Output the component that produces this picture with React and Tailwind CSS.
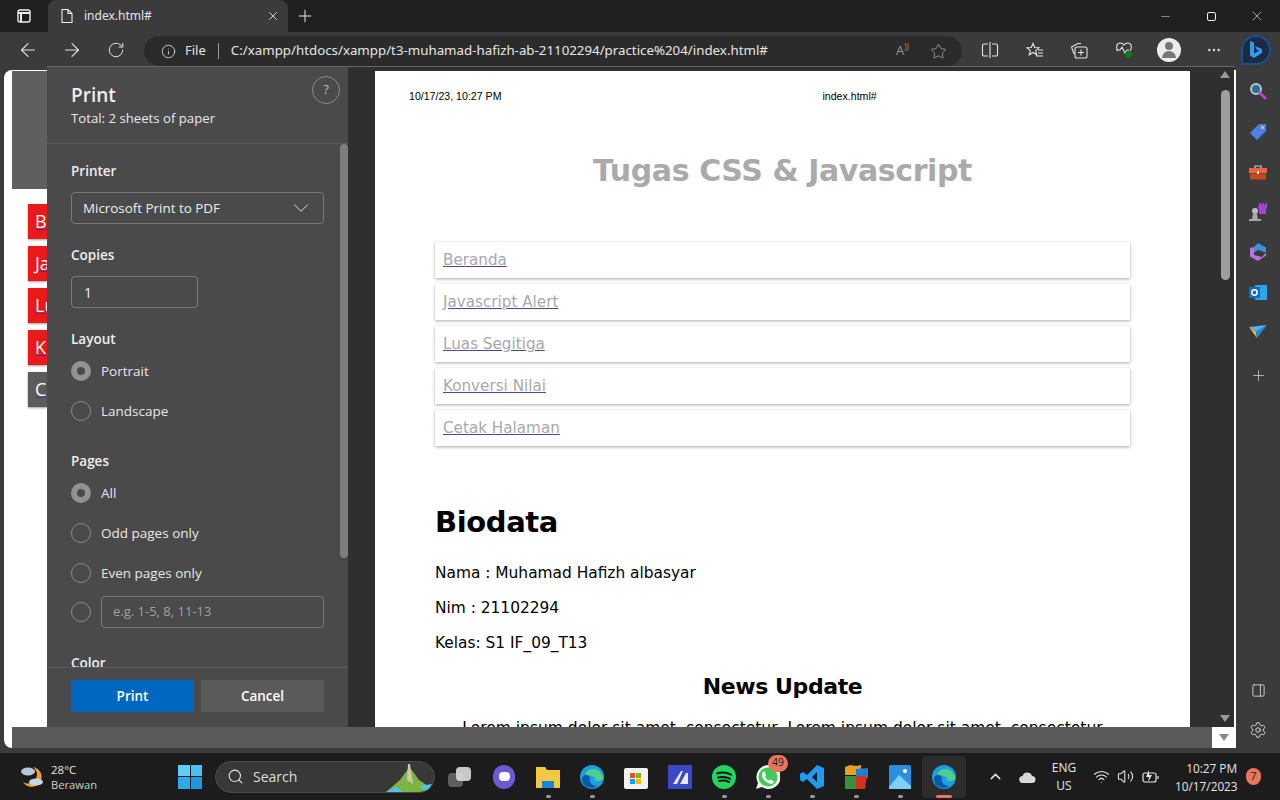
import { ArrowLeft, ArrowRight, RotateCw, Info, Star, X, Plus, Minus, Search, ChevronDown, ChevronUp, MoreHorizontal, Settings, PanelRight, Wifi, Volume2 } from 'lucide-react'

const uiFont = { fontFamily: '"Open Sans", "Noto Sans", sans-serif' }

const links = ['Beranda', 'Javascript Alert', 'Luas Segitiga', 'Konversi Nilai', 'Cetak Halaman']

function TabBar() {
  return (
    <div className="flex h-8 items-end bg-[#202020] text-[#e6e6e6]">
      <div className="flex h-8 w-12 items-center justify-center">
        <svg width="16" height="16" viewBox="0 0 16 16" fill="none" stroke="#eee" strokeWidth="1.4">
          <rect x="2" y="2" width="12" height="12" rx="2" />
          <path d="M2 5h12M5 5v9" strokeWidth="2" />
        </svg>
      </div>
      <div className="flex h-8 w-[240px] items-center rounded-t-lg bg-[#3b3b3b] pl-3 pr-2">
        <svg width="14" height="16" viewBox="0 0 14 16" fill="none" stroke="#eee" strokeWidth="1.1">
          <path d="M2 1.5h6l4 4v9H2zM8 1.5v4h4" />
        </svg>
        <span className="ml-[10px] flex-1 text-[12px]">index.html#</span>
        <X size={14} strokeWidth={1.5} />
      </div>
      <div className="flex h-8 w-[34px] items-center justify-center">
        <Plus size={20} strokeWidth={1.2} />
      </div>
      <div className="ml-auto flex h-8 items-center">
        <div className="flex w-[46px] justify-center"><Minus size={13} strokeWidth={1} /></div>
        <div className="flex w-[46px] justify-center">
          <div className="h-[9px] w-[9px] rounded-[2px] border border-[#eee]" />
        </div>
        <div className="flex w-[46px] justify-center"><X size={16} strokeWidth={1} /></div>
      </div>
    </div>
  )
}

function Toolbar() {
  return (
    <div className="flex h-[38px] items-start bg-[#3b3b3b] text-[#e4e4e4]">
      <div className="flex h-[36px] w-[56px] items-center justify-center"><ArrowLeft size={22} strokeWidth={1.2} /></div>
      <div className="flex h-[36px] w-[32px] items-center justify-center"><ArrowRight size={22} strokeWidth={1.2} /></div>
      <div className="flex h-[36px] w-[56px] items-center justify-center"><RotateCw size={18} strokeWidth={1.3} /></div>
      <div className="mt-[4px] flex h-[30px] w-[818px] items-center rounded-full bg-[#2b2b2b] pl-[17px] pr-[15px] text-[14px]">
        <Info size={15} strokeWidth={1.3} />
        <span className="ml-[9px] text-[13px]">File</span>
        <div className="mx-[12px] h-4 w-px bg-[#999]" />
        <span className="text-[13.300px] text-[#e6e6e6]">C:/xampp/htdocs/xampp/t3-muhamad-hafizh-ab-21102294/practice%204/index.html#</span>
        <span className="ml-auto text-[13px] text-[#8f8f8f]">A<span className="text-[8px] align-top">))</span></span>
        <Star size={17} strokeWidth={1.1} className="ml-[21px] text-[#aaa]" />
      </div>
      <div className="flex h-[36px] flex-1 items-center">
        <div className="ml-[19px] flex w-[18px] justify-center">
          <svg width="18" height="16" viewBox="0 0 18 16" fill="none" stroke="#e4e4e4" strokeWidth="1.1">
            <path d="M7 2H3a1.5 1.5 0 0 0-1.500 1.500v9A1.500 1.500 0 0 0 3 14h4M11 2h4a1.500 1.500 0 0 1 1.500 1.500v9A1.500 1.500 0 0 1 15 14h-4M9 0v16" />
          </svg>
        </div>
        <div className="ml-[27px] flex w-[18px] justify-center">
          <svg width="18" height="17" viewBox="0 0 18 17" fill="none" stroke="#e4e4e4" strokeWidth="1.1">
            <path d="M7 1.500l1.700 4 4.300.300-3.300 2.800 1 4.200L7 10.500l-3.700 2.300 1-4.200L1 5.800l4.300-.3zM12 8h5M12 11h5M10 14h7" />
          </svg>
        </div>
        <div className="ml-[26px] flex w-[18px] justify-center">
          <svg width="18" height="17" viewBox="0 0 18 17" fill="none" stroke="#e4e4e4" strokeWidth="1.1">
            <path d="M4 12L1.500 5 8 1.500h3" />
            <rect x="5" y="5" width="12" height="11" rx="2" />
            <path d="M11 7.500v6M8 10.500h6" />
          </svg>
        </div>
        <div className="relative ml-[27px] flex w-[18px] justify-center">
          <svg width="18" height="16" viewBox="0 0 18 16" fill="none" stroke="#e4e4e4" strokeWidth="1.1">
            <path d="M3 9C0 5 2 1 5.500 1 7 1 8.300 2 9 3c.7-1 2-2 3.500-2C16 1 18 5 15 9M1 8h4l2-3 3 6 2-3h2" />
          </svg>
          <div className="absolute left-[10px] top-[9px] h-[7px] w-[7px] rounded-full bg-[#0f7b0f]" />
        </div>
        <div className="ml-[24px] flex h-6 w-6 flex-col items-center justify-center overflow-hidden rounded-full bg-[#ececec]">
          <div className="h-2 w-2 rounded-full bg-[#777]" />
          <div className="mt-[1px] h-[7px] w-[14px] rounded-t-full rounded-b-md bg-[#777]" />
        </div>
        <MoreHorizontal size={16} strokeWidth={1.6} className="ml-[25px]" />
        <div className="ml-[19px] flex h-[30px] w-[30px] items-center justify-center rounded-full rounded-bl-none border-2 border-[#1c4f8f] bg-[#1b2b44]">
          <svg width="16" height="20" viewBox="0 0 16 20">
            <path d="M2 1l4 1.500v11l5-2.800-2.500-1.200L7 6l7 3v4l-8 5-4-2.500z" fill="#2f9cf2" />
          </svg>
        </div>
      </div>
    </div>
  )
}

function DimmedPage() {
  const buttons = ['bg-[#e81a1a]', 'bg-[#e81a1a]', 'bg-[#e81a1a]', 'bg-[#e81a1a]', 'bg-[#5b5b5b]']
  // only the start of each label shows left of the print panel
  const labels = ['Be', 'Ja', 'Lu', 'K', 'C']
  return (
    <div className="flex min-w-0 flex-1 flex-col overflow-hidden rounded-l-lg bg-white">
      <div className="ml-2 mr-6 mt-px h-[118px] bg-[#5f5f5f]" />
      <div className="flex flex-1 flex-col gap-[7px] pl-6 pt-[15px]">
        {buttons.map((color, i) => (
          <div key={labels[i]} className={`flex h-[35px] w-[19px] items-center overflow-hidden pl-[7px] text-[18px] text-white underline decoration-[#5a2d9a] shadow-[0_1px_2px_rgba(0,0,0,0.4)] ${color}`} style={uiFont}>
            {labels[i]}
          </div>
        ))}
      </div>
      <div className="flex h-[21px]">
        <div className="ml-2 flex-1 bg-[#5a5a5a]" />
        <div className="flex w-6 items-center justify-center">
          <div className="h-0 w-0 border-x-[5px] border-t-[7px] border-x-transparent border-t-[#8a8a8a]" />
        </div>
      </div>
    </div>
  )
}

function Radio({ checked }) {
  if (checked) {
    return (
      <div className="flex h-5 w-5 items-center justify-center rounded-full bg-[#929292]">
        <div className="h-2 w-2 rounded-full bg-[#4a4a4a]" />
      </div>
    )
  }
  return <div className="h-5 w-5 rounded-full border border-[#8a8a8a]" />
}

function RadioRow({ label, checked, className }) {
  return (
    <div className={`flex h-5 items-center gap-[10px] ${className}`}>
      <Radio checked={checked} />
      <span className="text-[13.500px] text-[#e8e8e8]">{label}</span>
    </div>
  )
}

function PrintPanel() {
  return (
    <div className="flex w-[301px] shrink-0 flex-col bg-[#4a4a4a] text-white" style={uiFont}>
      <div className="relative h-[77px] shrink-0 border-b border-[#5a5a5a] pl-6">
        <div className="mt-[14px] text-[19px] font-semibold leading-[28px] text-[#eee]">Print</div>
        <div className="text-[13.200px] leading-[18px] text-[#e8e8e8]">Total: 2 sheets of paper</div>
        <div className="absolute right-2 top-[9px] flex h-7 w-7 items-center justify-center rounded-full border border-[#8a8a8a] text-[13px] text-[#bbb]">?</div>
      </div>
      <div className="relative min-h-0 flex-1 overflow-hidden pl-6">
        <div className="absolute right-0 top-0 h-[414px] w-2 rounded-full bg-[#7d7d7d]" />
        <div className="mt-[17px] text-[13.500px] font-semibold leading-[20px] text-[#eee]">Printer</div>
        <div className="mt-[11px] flex h-8 w-[253px] items-center justify-between rounded-sm border border-[#7a7a7a] pl-[11px] pr-[9px] text-[13.400px] text-[#eee]">
          Microsoft Print to PDF
          <ChevronDown size={26} strokeWidth={0.8} />
        </div>
        <div className="mt-[21px] text-[13.500px] font-semibold leading-[20px] text-[#eee]">Copies</div>
        <div className="mt-[11px] flex h-8 w-[127px] items-center rounded-sm border border-[#7a7a7a] pl-3 text-[14px] text-[#eee]">1</div>
        <div className="mt-[21px] text-[13.500px] font-semibold leading-[20px] text-[#eee]">Layout</div>
        <RadioRow label="Portrait" checked className="mt-[12px]" />
        <RadioRow label="Landscape" className="mt-5" />
        <div className="mt-[30px] text-[13.500px] font-semibold leading-[20px] text-[#eee]">Pages</div>
        <RadioRow label="All" checked className="mt-[12px]" />
        <RadioRow label="Odd pages only" className="mt-5" />
        <RadioRow label="Even pages only" className="mt-5" />
        <div className="mt-[13px] flex items-center gap-[10px]">
          <Radio />
          <div className="flex h-8 w-[223px] items-center rounded-sm border border-[#7a7a7a] pl-[11px] text-[13px] text-[#a0a0a0]">e.g. 1-5, 8, 11-13</div>
        </div>
        <div className="mt-[25px] text-[13.500px] font-semibold leading-[20px] text-[#eee]">Color</div>
      </div>
      <div className="flex h-[60px] shrink-0 gap-[7px] border-t border-[#5a5a5a] pl-6 pt-[12px]">
        <div className="flex h-8 w-[123px] items-center justify-center bg-[#0067c0] text-[13.500px] font-semibold">Print</div>
        <div className="flex h-8 w-[123px] items-center justify-center bg-[#5b5b5b] text-[13.500px] font-semibold">Cancel</div>
      </div>
    </div>
  )
}

function Paper() {
  return (
    <div className="ml-[27px] mt-[4px] w-[815px] shrink-0 overflow-hidden bg-white text-black" style={{ fontFamily: '"DejaVu Sans", sans-serif' }}>
      <div className="mt-[20px] flex h-3 items-center pl-[34px] text-[10.600px]" style={{ fontFamily: '"Liberation Sans", sans-serif' }}>
        <span>10/17/23, 10:27 PM</span>
        <span className="ml-[321px]">index.html#</span>
      </div>
      <h1 className="mt-[48px] text-center text-[30px] font-bold leading-[40px] tracking-[-0.4px] text-[#aaaaaa]">Tugas CSS &amp; Javascript</h1>
      <div className="mx-[60px] mt-[51px] flex flex-col gap-[6px]">
        {links.map(link => (
          <div key={link} className="flex h-9 items-center pl-2 text-[15.200px] text-[#a9a9a9] underline decoration-[#6a3d8a] shadow-[0_1px_3px_rgba(0,0,0,0.35)]">
            {link}
          </div>
        ))}
      </div>
      <h2 className="ml-[60px] mt-[56px] text-[29px] font-bold leading-[40px] tracking-[-0.4px]">Biodata</h2>
      <p className="ml-[60px] mt-[21px] text-[15.400px] leading-[20px]">Nama : Muhamad Hafizh albasyar</p>
      <p className="ml-[60px] mt-[15px] text-[15.400px] leading-[20px]">Nim : 21102294</p>
      <p className="ml-[60px] mt-[15px] text-[15.400px] leading-[20px]">Kelas: S1 IF_09_T13</p>
      <h3 className="mt-[18px] text-center text-[22px] font-bold leading-[32px] tracking-[-0.4px]">News Update</h3>
      <p className="mt-[15px] whitespace-nowrap text-center text-[15.500px] leading-[20px]">Lorem ipsum dolor sit amet, consectetur, Lorem ipsum dolor sit amet, consectetur</p>
    </div>
  )
}

function PrintDialog() {
  return (
    <div className="absolute left-[47px] top-[-4px] flex h-[661px] w-[1187px] border-t border-[#666] bg-[#2f2f2f]">
      <PrintPanel />
      <Paper />
      <div className="ml-[29px] flex w-[12px] flex-col items-center pt-[4px]">
        <div className="h-0 w-0 border-x-[5px] border-b-[7px] border-x-transparent border-b-[#9a9a9a]" />
        <div className="mt-[12px] h-[190px] w-[9px] rounded-full bg-[#9f9f9f]" />
        <div className="mb-[5px] mt-auto h-0 w-0 border-x-[5px] border-t-[7px] border-x-transparent border-t-[#9a9a9a]" />
      </div>
    </div>
  )
}

function Sidebar() {
  return (
    <div className="flex w-[44px] shrink-0 flex-col items-center pt-[11px]">
      <div className="flex h-5 items-center justify-center">
        <svg width="18" height="18" viewBox="0 0 18 18" fill="none">
          <circle cx="7" cy="7" r="5" stroke="#b9c4cc" strokeWidth="2" fill="#2d6b99" />
          <path d="M11 11l5 5" stroke="#c23fd0" strokeWidth="3" strokeLinecap="round" />
        </svg>
      </div>
      <div className="mt-[21px] flex h-5 items-center justify-center">
        <svg width="18" height="18" viewBox="0 0 18 18">
          <path d="M10 1h7v7l-9 9-7-7z" fill="#4f7fe8" />
          <circle cx="13.500" cy="4.500" r="1.500" fill="#f2d13c" />
        </svg>
      </div>
      <div className="mt-[20px] flex h-5 items-center justify-center">
        <svg width="18" height="16" viewBox="0 0 18 16">
          <path d="M6 4V2h6v2" fill="none" stroke="#c9c9c9" strokeWidth="1.200" />
          <rect y="4" width="18" height="5" fill="#e8643c" />
          <rect x="1" y="9.500" width="16" height="6" fill="#c2491f" />
          <rect x="8" y="7" width="2" height="3" fill="#eee" />
        </svg>
      </div>
      <div className="mt-[20px] flex h-5 items-center justify-center">
        <svg width="18" height="20" viewBox="0 0 18 20">
          <circle cx="6" cy="9" r="3" fill="#bdbdbd" />
          <path d="M4 12h4l1 5h3v2H0v-2h3z" fill="#a8a8a8" />
          <path d="M10 1h2v2h1V1h2v2h1V1h2v5l-1 1v5h-7V7l-1-1z" fill="#a53fe0" />
        </svg>
      </div>
      <div className="mt-[20px] flex h-5 items-center justify-center">
        <svg width="18" height="18" viewBox="0 0 18 18">
          <path d="M9 0l8 4.500v5L9 7 5 9.500V4z" fill="#3f8fe0" />
          <path d="M1 5l4-1v8l8 2 4-4.500v3L9 18 1 13.500z" fill="#b873e0" />
        </svg>
      </div>
      <div className="mt-[20px] flex h-5 items-center justify-center">
        <svg width="18" height="17" viewBox="0 0 18 17">
          <rect x="6" y="1" width="12" height="15" rx="1" fill="#28a8ea" />
          <rect y="3" width="11" height="11" rx="1" fill="#0a6cc4" />
          <circle cx="5.500" cy="8.500" r="2.700" fill="none" stroke="#fff" strokeWidth="1.500" />
        </svg>
      </div>
      <div className="mt-[20px] flex h-5 items-center justify-center">
        <svg width="18" height="14" viewBox="0 0 18 14">
          <path d="M0 2l18-2-11 7z" fill="#4db4f0" />
          <path d="M0 2l7 5 1 6z" fill="#f2c230" />
          <path d="M18 0L8 13l-1-6z" fill="#1f8ae0" />
        </svg>
      </div>
      <Plus size={17} strokeWidth={1} className="mt-[25px] text-[#ddd]" />
      <PanelRight size={15} strokeWidth={1.3} className="mt-auto text-[#e4e4e4]" />
      <Settings size={18} strokeWidth={1.2} className="mb-[9px] mt-[23px] text-[#e4e4e4]" />
    </div>
  )
}

function TaskIcon({ children, dot, active }) {
  return (
    <div className={`relative flex h-[42px] w-[44px] items-center justify-center rounded ${active ? 'bg-[#2c2c2c]' : ''}`}>
      {children}
      {dot && <div className="absolute bottom-0 h-[3px] w-[5px] rounded-full bg-[#9a9a9a]" />}
      {active && <div className="absolute bottom-0 h-[3px] w-4 rounded-full bg-[#e8765c]" />}
    </div>
  )
}

function EdgeIcon() {
  return (
    <svg width="24" height="24" viewBox="0 0 24 24">
      <circle cx="12" cy="12" r="12" fill="#1b9de2" />
      <path d="M5 9c3-7 15-7 18 3 .5 3-2 4-5 4-2 0-4-1-3-3-3-3-8-3-10-4z" fill="#4ed08c" />
      <path d="M10 12c-2 5 2 9 7 9-4 4-13 2-15-5-1-4 3-9 8-4z" fill="#0c59a4" />
    </svg>
  )
}

function Taskbar() {
  return (
    <div className="flex h-[47px] shrink-0 items-center bg-[#1c1c1c] text-[#e6e6e6]" style={uiFont}>
      <div className="ml-[19px] flex w-[26px] justify-center">
        <svg width="26" height="24" viewBox="0 0 26 24">
          <path d="M14 2a10 10 0 1 1-10 15A9 9 0 0 0 14 2z" fill="#f0a030" />
          <ellipse cx="9" cy="6.500" rx="7" ry="4" fill="#b7c7da" />
          <ellipse cx="17" cy="17" rx="7" ry="3.500" fill="#c9d6e6" />
        </svg>
      </div>
      <div className="ml-[6px] w-[127px] leading-[15px]">
        <div className="text-[11.500px]">28°C</div>
        <div className="text-[11.200px] text-[#cfcfcf]">Berawan</div>
      </div>
      <div className="grid h-[24px] w-[24px] grid-cols-2 gap-[1px]">
        <div className="bg-[#5fcdf8]" />
        <div className="bg-[#49c0f4]" />
        <div className="bg-[#2fa9ea]" />
        <div className="bg-[#1f96e0]" />
      </div>
      <div className="relative ml-[13px] flex h-[32px] w-[220px] items-center overflow-hidden rounded-full border border-[#4a4a4a] bg-[#383838] pl-[11px]">
        <Search size={17} strokeWidth={1.5} />
        <span className="ml-[9px] text-[14px] text-[#ddd]">Search</span>
        <svg className="absolute right-0 top-0" width="50" height="32" viewBox="0 0 50 32">
          <path d="M2 30l14-12 8-11h3l8 11 12 8-4 6z" fill="#7cb342" />
          <path d="M23 18l1-16h2l3 20z" fill="#cfc7a8" />
          <path d="M2 30l10-5 8 6zM36 24l12-2-4 9z" fill="#4fc3f7" />
        </svg>
      </div>
      <div className="ml-[3px] flex items-center">
        <TaskIcon>
          <div className="relative h-5 w-6">
            <div className="absolute bottom-0 left-0 h-[14px] w-[15px] rounded-sm bg-[#5e5e5e]" />
            <div className="absolute right-[1px] top-0 h-[14px] w-[15px] rounded-sm bg-[#dcdcdc] opacity-90" />
          </div>
        </TaskIcon>
        <TaskIcon>
          <div className="flex h-[24px] w-[22px] items-center justify-center rounded-full bg-[#6b5bd2]">
            <div className="h-[9px] w-[11px] rounded-sm bg-white" />
          </div>
        </TaskIcon>
        <TaskIcon dot>
          <svg width="24" height="22" viewBox="0 0 24 22">
            <path d="M0 1h9l2 3h13v18H0z" fill="#f5c842" />
            <path d="M6 15h12v7H6z" fill="#1d86d4" />
          </svg>
        </TaskIcon>
        <TaskIcon dot><EdgeIcon /></TaskIcon>
        <TaskIcon>
          <svg width="24" height="24" viewBox="0 0 24 24">
            <rect y="3" width="24" height="21" rx="2" fill="#f2f2f2" />
            <rect x="6" y="8" width="5" height="5" fill="#f25022" />
            <rect x="12" y="8" width="5" height="5" fill="#7fba00" />
            <rect x="6" y="14" width="5" height="5" fill="#00a4ef" />
            <rect x="12" y="14" width="5" height="5" fill="#ffb900" />
          </svg>
        </TaskIcon>
        <TaskIcon>
          <svg width="24" height="24" viewBox="0 0 24 24">
            <rect width="24" height="24" fill="#3b48c8" />
            <path d="M5 19L13 6h2L9 19zM12 19l6-11h2v11z" fill="#e8e8f8" />
          </svg>
        </TaskIcon>
        <TaskIcon dot>
          <svg width="24" height="24" viewBox="0 0 24 24" fill="none">
            <circle cx="12" cy="12" r="12" fill="#1ed760" />
            <path d="M5 8.500c5-1.500 10-1 14 1.200M6 12.500c4-1 8.500-.7 12 1.200M7 16c3.500-.7 7-.4 10 1" stroke="#111" strokeWidth="2" strokeLinecap="round" />
          </svg>
        </TaskIcon>
        <TaskIcon dot>
          <svg width="24" height="24" viewBox="0 0 24 24">
            <path d="M12 0a12 12 0 0 0-10 18L0 24l6-2A12 12 0 1 0 12 0z" fill="#f4f4f4" />
            <circle cx="12" cy="12" r="9.500" fill="#3ecb5a" />
            <path d="M8 6l2 4-1 1.500c1 2 2 3 4 4l1.500-1 3.500 2c-1 3-4 2.500-6 1.500-4-2-6-5-6-8 0-2 1-3 2-4z" fill="#fff" />
          </svg>
          <div className="absolute right-[2px] top-[-1px] flex h-[17px] w-[20px] items-center justify-center rounded-full bg-[#e8765c] text-[10.500px] text-[#222]">49</div>
        </TaskIcon>
        <TaskIcon dot>
          <svg width="24" height="24" viewBox="0 0 24 24">
            <path d="M17 0l7 3v18l-7 3L7 14l-4 3-3-2v-6l3-2 4 3zM17 7l-5 5 5 5z" fill="#1f9cf0" />
          </svg>
        </TaskIcon>
        <TaskIcon dot>
          <svg width="24" height="26" viewBox="0 0 24 26">
            <path d="M1 3l5-2 6 1 5-1v10H1z" fill="#e8a020" />
            <path d="M12 5l12-1v10H12z" fill="#1f7fd0" />
            <path d="M1 12h11v13H1z" fill="#3a8f3a" />
            <path d="M12 12h11l-2 13h-9z" fill="#d8301f" />
          </svg>
        </TaskIcon>
        <TaskIcon dot>
          <svg width="22" height="24" viewBox="0 0 22 24">
            <rect width="22" height="24" rx="2" fill="#2a8fe0" />
            <path d="M0 22l10-12 12 11v3H0z" fill="#7fd0f8" />
            <circle cx="16" cy="6" r="2" fill="#fff" />
          </svg>
        </TaskIcon>
        <TaskIcon active><EdgeIcon /></TaskIcon>
      </div>
      <ChevronUp size={17} strokeWidth={2} className="ml-[21px]" />
      <svg className="ml-[15px]" width="17" height="12" viewBox="0 0 17 12">
        <path d="M4 12a3.500 3.500 0 0 1-.5-7A5 5 0 0 1 13 5a3.500 3.500 0 0 1 0 7z" fill="#d8d8d8" />
      </svg>
      <div className="ml-[7px] w-[42px] text-center text-[12px] leading-[18px]">
        <div>ENG</div>
        <div>US</div>
      </div>
      <Wifi size={17} strokeWidth={1.5} className="ml-[8px]" />
      <Volume2 size={17} strokeWidth={1.5} className="ml-[7px]" />
      <svg className="ml-[8px]" width="18" height="16" viewBox="0 0 18 16" fill="none" stroke="#e6e6e6" strokeWidth="1.200">
        <rect x="1" y="4" width="13" height="9" rx="2" />
        <path d="M16 7v3" />
        <path d="M7 1L4 8h3l-1 5 4-7H7z" fill="#e6e6e6" stroke="none" />
      </svg>
      <div className="ml-[15px] w-[62px] whitespace-nowrap text-right text-[11.800px] leading-[18px]">
        <div>10:27 PM</div>
        <div>10/17/2023</div>
      </div>
      <div className="ml-[9px] flex h-[17px] w-[15px] items-center justify-center rounded-full bg-[#e8765c] text-[11px] text-[#222]">7</div>
    </div>
  )
}

function App() {
  return (
    <div className="flex h-[800px] w-[1280px] flex-col overflow-hidden bg-[#3b3b3b]">
      <TabBar />
      <Toolbar />
      <div className="relative flex h-[678px] shrink-0 pl-1">
        <DimmedPage />
        <Sidebar />
        <PrintDialog />
      </div>
      <div className="h-[5px] shrink-0" />
      <Taskbar />
    </div>
  )
}

export default App
